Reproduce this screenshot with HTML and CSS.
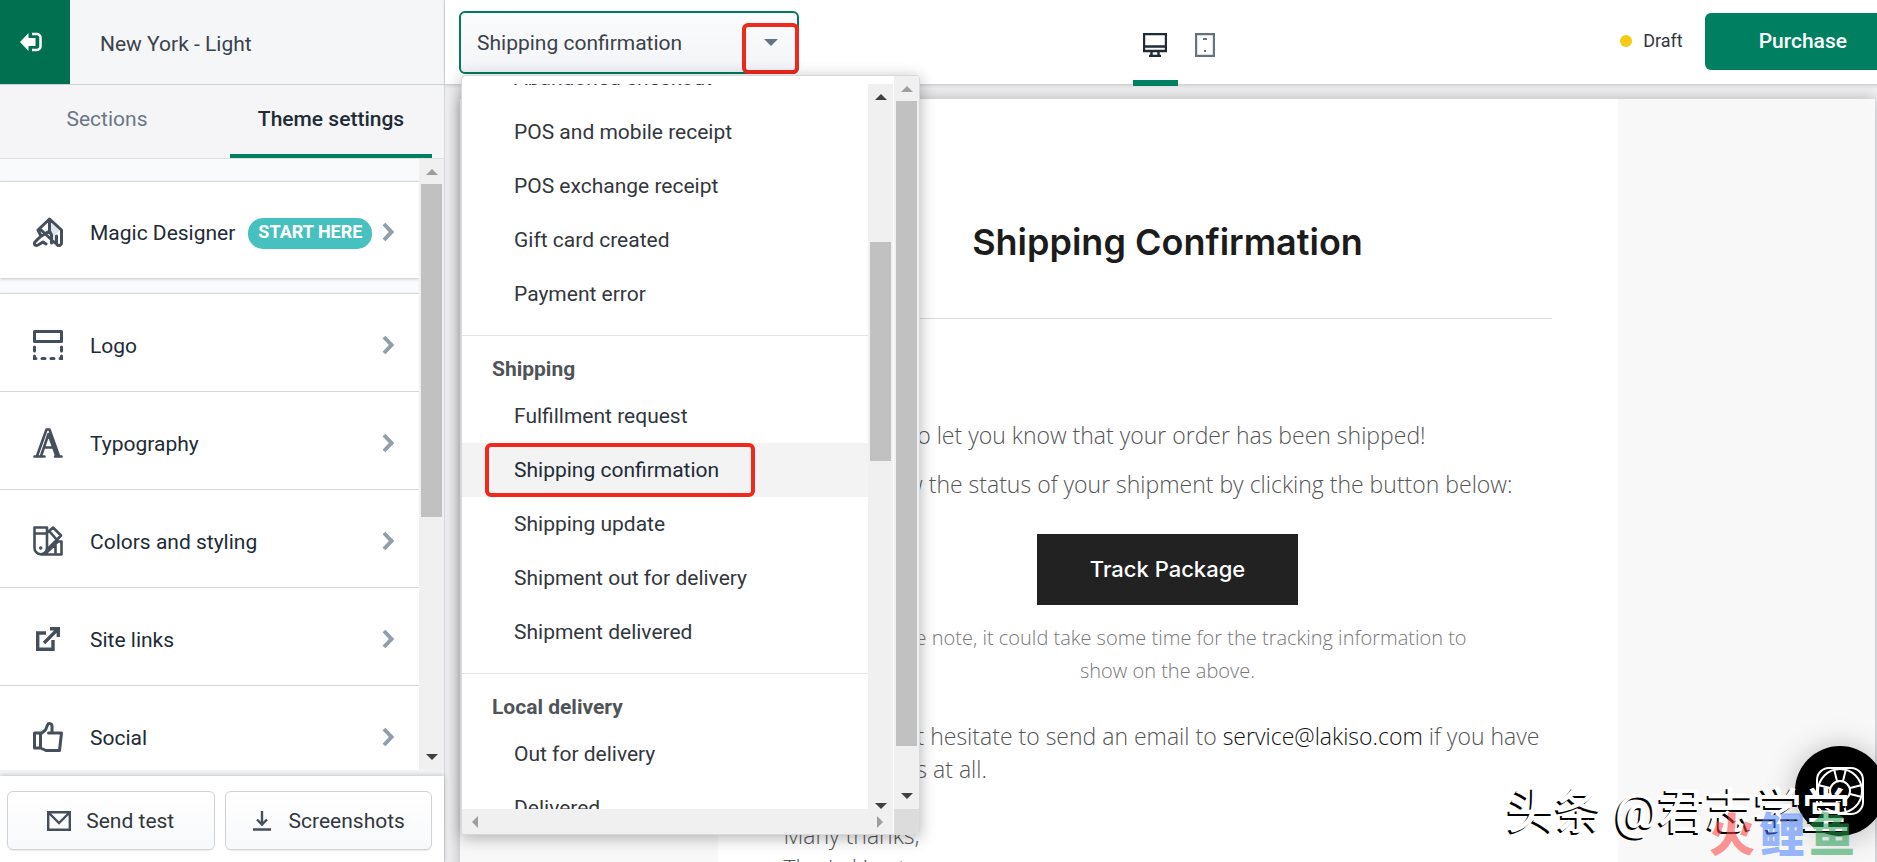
FILE: index.html
```html
<!DOCTYPE html>
<html lang="en">
<head>
<meta charset="utf-8">
<title>New York - Light</title>
<link rel="stylesheet" href="styles.css">
</head>
<body>
<div class="app">
  <aside class="sidebar">
    <header class="side-head">
      <button class="exit" aria-label="Exit editor">
        <svg width="24" height="20" viewBox="0 0 24 20"><path d="M1 10 9.500 1v5h7v8h-7v5z" fill="#fff"/><path d="M13 2h5a3.500 3.500 0 0 1 3.500 3.500v9A3.500 3.500 0 0 1 18 18h-5" fill="none" stroke="#fff" stroke-width="2.500"/></svg>
      </button>
      <h1 class="theme-name">New York - Light</h1>
    </header>
    <nav class="tabs">
      <button class="tab">Sections</button>
      <button class="tab tab-on">Theme settings</button>
    </nav>
    <div class="scroller">
      <div class="settings">
        <div class="group group-first">
          <button class="row">
            <svg class="icon" viewBox="0 0 30 30"><path d="M16.500 4v11l3 2v8l3 2V17l5-4z" fill="#dfe3ee"/><g fill="none" stroke="#454f5b" stroke-width="3" stroke-linejoin="round" stroke-linecap="round"><path d="M5 13 16.500 2 28.500 13v13a2.500 2.500 0 0 1-5 0v-7M5 13l3 6-6 6c-2 3 1 4 3 3l5-3 3 2M16.500 3v11l-8 5M16.500 14l2 4v8M7 12l15 14"/></g></svg>
            <span class="label">Magic Designer</span><span class="badge">START HERE</span>
            <svg class="chev" viewBox="0 0 12 20"><path d="M2 2l7.500 8L2 18" fill="none" stroke="#919eab" stroke-width="4"/></svg>
          </button>
        </div>
        <div class="group">
          <button class="row">
            <svg class="icon" viewBox="0 0 30 30"><g fill="none" stroke="#454f5b" stroke-width="3"><path d="M1.500 1.500h27v10h-27z" stroke-linejoin="round"/><path d="M1.500 17v4M28.500 17v4M9 28.500h3M18 28.500h3M1.500 26v2.500H3M28.500 26v2.500H27" stroke-linecap="round"/></g></svg>
            <span class="label">Logo</span>
            <svg class="chev" viewBox="0 0 12 20"><path d="M2 2l7.500 8L2 18" fill="none" stroke="#919eab" stroke-width="4"/></svg>
          </button>
          <button class="row">
            <svg class="icon" viewBox="0 0 30 30"><g fill="none" stroke="#454f5b" stroke-width="2.600" stroke-linecap="round" stroke-linejoin="round"><path d="M1.500 28.500h10M22 28.500h6.500M4 28 13.500 1.500h3L26 28M8 28 15.500 6 23 27M11.500 19.500h9"/></g></svg>
            <span class="label">Typography</span>
            <svg class="chev" viewBox="0 0 12 20"><path d="M2 2l7.500 8L2 18" fill="none" stroke="#919eab" stroke-width="4"/></svg>
          </button>
          <button class="row">
            <svg class="icon" viewBox="0 0 30 30"><g fill="none" stroke="#454f5b" stroke-width="2.600" stroke-linejoin="round"><path d="M1.500 1.500h12.500V22a6.250 6.250 0 0 1-12.500 0zM1.500 7.500h12.500M7.700 28.500h20.800V15.500H25L12 28M14 7l6-5.500 8 8L13 25M17 6l7 8M22.500 18v10"/></g><circle cx="7.700" cy="22" r="1.800" fill="#454f5b"/></svg>
            <span class="label">Colors and styling</span>
            <svg class="chev" viewBox="0 0 12 20"><path d="M2 2l7.500 8L2 18" fill="none" stroke="#919eab" stroke-width="4"/></svg>
          </button>
          <button class="row">
            <svg class="icon" viewBox="0 0 30 30"><g fill="none" stroke="#454f5b" stroke-width="3.400"><path d="M13 9H4.700v16.300H20V16"/><path d="M11 19 25 5M17 4.700h8.300V13"/></g></svg>
            <span class="label">Site links</span>
            <svg class="chev" viewBox="0 0 12 20"><path d="M2 2l7.500 8L2 18" fill="none" stroke="#919eab" stroke-width="4"/></svg>
          </button>
          <button class="row">
            <svg class="icon" viewBox="0 0 30 30"><g fill="none" stroke="#454f5b" stroke-width="3" stroke-linejoin="round" stroke-linecap="round"><path d="M1.500 11h6v15h-6zM7.500 12l5-4 2-5c1-2.500 4.500-1.500 4.500 1v7h9.500l-2 17.500H13L7.500 26M15.500 11H19"/></g></svg>
            <span class="label">Social</span>
            <svg class="chev" viewBox="0 0 12 20"><path d="M2 2l7.500 8L2 18" fill="none" stroke="#919eab" stroke-width="4"/></svg>
          </button>
        </div>
      </div>
      <div class="vbar"><i class="arrow up dim"></i><i class="thumb side-thumb"></i><i class="arrow down"></i></div>
    </div>
    <footer class="side-foot">
      <button class="btn"><svg width="24" height="20" viewBox="0 0 24 20"><path d="M1.200 1.200h21.600v17.600H1.200zM2 2l10 10L22 2" fill="none" stroke="#454f5b" stroke-width="2.400"/></svg>Send test</button>
      <button class="btn btn-wide"><svg width="20" height="20" viewBox="0 0 20 20"><path d="M10 0v13M5 8.500l5 5 5-5M1 18.500h18" fill="none" stroke="#454f5b" stroke-width="2.400"/></svg>Screenshots</button>
    </footer>
  </aside>

  <main class="main">
    <header class="topbar">
      <div class="picker">
        <select class="select" aria-label="Email template">
          <option>Shipping confirmation</option>
        </select>
        <i class="caret"></i>
        <i class="mark mark-caret"></i>
        <div class="menu">
          <div class="menu-list">
            <ul class="options">
              <li class="opt">Abandoned checkout</li>
              <li class="opt">POS and mobile receipt</li>
              <li class="opt">POS exchange receipt</li>
              <li class="opt">Gift card created</li>
              <li class="opt">Payment error</li>
              <li class="opt-head">Shipping</li>
              <li class="opt">Fulfillment request</li>
              <li class="opt opt-on">Shipping confirmation<i class="mark mark-opt"></i></li>
              <li class="opt">Shipping update</li>
              <li class="opt">Shipment out for delivery</li>
              <li class="opt">Shipment delivered</li>
              <li class="opt-head">Local delivery</li>
              <li class="opt">Out for delivery</li>
              <li class="opt">Delivered</li>
            </ul>
            <div class="vbar"><i class="arrow up"></i><i class="thumb inner-thumb"></i><i class="arrow down"></i></div>
          </div>
          <div class="hbar"><i class="arrow left dim"></i><i class="arrow right dim"></i></div>
          <div class="vbar outer"><i class="arrow up dim"></i><i class="thumb outer-thumb"></i><i class="arrow down"></i></div>
          <i class="corner"></i>
        </div>
      </div>
      <div class="devices">
        <button class="device device-on" aria-label="Desktop"><svg width="24" height="24" viewBox="0 0 24 24"><path d="M1 1h22v17H1zM1 13.500h22M8.500 18v5M15.500 18v5M6 23h12" fill="none" stroke="#212b36" stroke-width="2.400"/></svg></button>
        <button class="device" aria-label="Mobile"><svg width="20" height="24" viewBox="0 0 20 24"><path d="M1 1h18v22H1z" fill="none" stroke="#637381" stroke-width="2.400"/><path d="M8 6h4M9 18h2" stroke="#637381" stroke-width="2"/></svg></button>
      </div>
      <div class="actions">
        <span class="status"><i class="dot"></i>Draft</span>
        <button class="purchase">Purchase</button>
      </div>
    </header>
    <div class="stage">
      <div class="frame">
        <article class="email">
          <h2 class="title">Shipping Confirmation</h2>
          <p class="lead">Just wanted to let you know that your order has been shipped!</p>
          <p class="lead">You may view the status of your shipment by clicking the button below:</p>
          <a class="track" href="#">Track Package</a>
          <p class="note">Please note, it could take some time for the tracking information to show on the above.</p>
          <p class="body">Please do not hesitate to send an email to <a class="mail" href="#">service@lakiso.com</a> if you have any questions at all.</p>
          <p class="body">Many thanks,<br>The Lakiso team</p>
        </article>
      </div>
    </div>
  </main>

  <button class="help" aria-label="Help">
    <svg width="50" height="50" viewBox="0 0 50 50"><g fill="none" stroke="#fff" stroke-width="2"><rect x="2" y="2" width="46" height="46" rx="12"/><circle cx="25" cy="25" r="22"/><circle cx="25" cy="25" r="10"/><path d="M19 3l3 12M31 3l-3 12M47 19l-12 3M47 31l-12-3M3 19l12 3M3 31l12-3M19 47l3-12M31 47l-3-12"/></g></svg>
  </button>
  <div class="sign">头条 @君志学堂</div>
  <div class="brand"><span class="r">火</span><span class="b">鲤</span><span class="g">鱼</span></div>
</div>
</body>
</html>
```
FILE: styles.css
```css
* { box-sizing: border-box; }
body { margin: 0; font-family: Roboto, "Noto Sans CJK SC", sans-serif; color: #212b36; }
button { border: 0; margin: 0; padding: 0; background: none; font: inherit; color: inherit; }
ul { list-style: none; margin: 0; padding: 0; }
h1, h2, p { margin: 0; }

.app { position: relative; display: flex; height: 100vh; overflow: hidden; font-size: 21px; line-height: 28px; }

/* Sidebar */
.sidebar { flex: none; width: 445px; display: flex; flex-direction: column; background: #f4f5f7; border-right: 1px solid #d5d8dc; }
.side-head { flex: none; display: flex; height: 85px; align-items: center; border-bottom: 1px solid #cfd3d8; background: #f4f6f8; }
.exit { width: 70px; height: 84px; padding-right: 8px; background: #007051; display: flex; align-items: center; justify-content: center; }
.theme-name { margin-left: 30px; padding-top: 3px; font-size: 21px; font-weight: 400; color: #3a424b; }
.tabs { flex: none; height: 74px; display: flex; background: #f5f5f8; border-bottom: 1px solid #dfe1e5; padding-right: 12px; gap: 16px; }
.tab { width: 214px; padding-bottom: 1px; color: #6b7785; border-bottom: 4px solid transparent; }
.tab-on { flex: 1; color: #212b36; font-weight: 500; border-bottom-color: #008060; }
.scroller { flex: 1; min-height: 0; display: flex; background: #f9fafb; }
.settings { flex: 1; overflow: hidden; padding-top: 23px; }
.group { margin-bottom: 16px; background: #fff; box-shadow: 0 -1px 1px rgba(0, 0, 0, .1), 0 1px 3px rgba(0, 0, 0, .22); }
.row { width: 100%; height: 98px; padding: 4px 25px 0 33px; display: flex; align-items: center; text-align: left; border-bottom: 1px solid #d3d6da; }
.group-first .row { height: 96px; border-bottom: 0; }
.icon { width: 30px; height: 30px; margin-right: 27px; flex: none; }
.label { padding-top: 2px; }
.badge { margin: 2px 0 0 13px; padding: 0 10px; height: 31px; border-radius: 15px; background: #47c1bf; color: #fff; font-size: 18px; line-height: 28px; font-weight: 700; }
.chev { width: 12px; height: 20px; margin-left: auto; }
.side-foot { position: relative; flex: none; height: 86px; margin-top: 6px; display: flex; gap: 10px; padding: 15px 12px 12px 7px; background: #fff; box-shadow: 0 -1px 5px rgba(0, 0, 0, .2); }
.btn { flex: 1; height: 59px; display: flex; align-items: center; justify-content: center; gap: 15px; border: 1px solid #cfd3d8; border-radius: 6px; background: linear-gradient(#fff, #f8f9fb); color: #32373d; box-shadow: 0 1px 1px rgba(0, 0, 0, .08); }
.btn-wide { gap: 17px; }

/* Drawn scrollbars */
.vbar { position: relative; flex: none; width: 25px; display: flex; flex-direction: column; align-items: center; justify-content: space-between; padding: 10px 0; background: #f0f0f0; }
.arrow { border: 6px solid transparent; }
.arrow.up { border-top: 0; border-bottom-color: #404040; }
.arrow.down { border-bottom: 0; border-top-color: #404040; }
.arrow.left { border-left: 0; border-right-color: #404040; }
.arrow.right { border-right: 0; border-left-color: #404040; }
.arrow.up.dim { border-bottom-color: #9e9e9e; }
.arrow.left.dim { border-right-color: #9e9e9e; }
.arrow.right.dim { border-left-color: #9e9e9e; }
.thumb { position: absolute; left: 2px; right: 2px; background: #c1c1c1; }
.side-thumb { top: 25px; height: 333px; }
.inner-thumb { top: 158px; height: 219px; }
.outer-thumb { top: 25px; height: 645px; }

/* Top bar */
.main { flex: 1; min-width: 0; display: flex; flex-direction: column; background: #efeff2; }
.topbar { position: relative; z-index: 2; flex: none; height: 85px; margin-right: -24px; padding-left: 14px; display: grid; grid-template-columns: 1fr auto 1fr; align-items: center; background: #fff; border-bottom: 1px solid #d0d2d6; box-shadow: 0 1px 3px rgba(0, 0, 0, .12); }
.picker { position: relative; align-self: start; margin-top: 11px; width: 340px; height: 63px; }
.select { appearance: none; display: block; width: 100%; height: 100%; padding: 0 60px 0 16px; border: 2px solid #007a5c; border-radius: 6px; background: linear-gradient(#fafbfc, #f4f5f8); font: inherit; color: #3a424b; }
.caret { position: absolute; right: 21px; top: 28px; border: 7px solid transparent; border-top-color: #637381; border-bottom: 0; }
.mark { position: absolute; border: 4px solid #f0281e; border-radius: 6px; }
.mark-caret { right: 0; top: 12px; width: 57px; height: 51px; }
.devices { display: flex; align-self: stretch; gap: 5px; }
.device { width: 45px; height: 86px; padding-top: 10px; border-bottom: 6px solid transparent; display: flex; align-items: center; justify-content: center; }
.device-on { border-bottom-color: #008060; }
.actions { display: flex; justify-content: flex-end; align-items: center; gap: 22px; padding-bottom: 4px; }
.status { display: flex; align-items: center; gap: 11px; font-size: 18px; color: #32373d; }
.dot { width: 12px; height: 12px; border-radius: 50%; background: #f7cb15; }
.purchase { height: 57px; padding: 0 54px; border-radius: 6px; background: #008060; color: #fff; font-weight: 500; }

/* Template menu */
.menu { position: absolute; left: 2px; top: 64px; width: 459px; height: 760px; display: grid; grid-template: 1fr 25px / 1fr 25px; column-gap: 1px; background: #fff; border: 1px solid #d8d8d8; border-radius: 4px; box-shadow: 0 3px 16px rgba(0, 0, 0, .3); overflow: hidden; }
.menu-list { display: flex; min-height: 0; margin-top: 8px; overflow: hidden; }
.options { flex: 1; min-height: 0; margin-top: -33px; color: #32373d; }
.menu-list .vbar { padding-bottom: 0; }
.opt { position: relative; height: 54px; padding-left: 52px; line-height: 54px; }
.opt-on { background: #f3f3f4; color: #212b36; }
.opt-head { height: 68px; padding: 20px 0 0 30px; font-weight: 700; color: #4f5458; background: linear-gradient(#e1e3e5, #e1e3e5) 0 14px / 100% 1px no-repeat; line-height: 56px; }
.mark-opt { left: 23px; top: 0; width: 270px; height: 54px; }
.hbar { grid-row: 2; grid-column: 1; display: flex; align-items: center; justify-content: space-between; padding: 0 10px; background: #f0f0f0; }
.outer { grid-row: 1; grid-column: 2; }
.corner { grid-row: 2; grid-column: 2; background: #dcdcdc; }

/* Email preview */
.stage { flex: 1; min-height: 0; padding: 14px 2px 0 15px; overflow: hidden; }
.frame { height: 900px; background: #f8f8f8; box-shadow: 0 0 14px rgba(0, 0, 0, .25); }
.email { width: 900px; height: 100%; margin: 0 auto; padding: 0 66px; background: #fff; font-family: "Open Sans", sans-serif; font-weight: 300; font-size: 23px; line-height: 33px; color: #555; }
.title { padding: 119px 0 52px; border-bottom: 1px solid #dadada; margin-bottom: 100px; text-align: center; font-family: Inter, sans-serif; font-weight: 600; font-size: 36px; line-height: 48px; color: #1c1c1c; }
.lead { margin-bottom: 16px; }
.track { display: block; width: 261px; height: 71px; margin: 33px auto 16px; background: #222; color: #fff; text-align: center; text-decoration: none; font-family: Inter, sans-serif; font-weight: 500; font-size: 22px; line-height: 71px; }
.note { padding: 0 60px; margin-bottom: 33px; text-align: center; font-size: 20px; color: #777; }
.body { margin-bottom: 33px; }
.mail { color: #111; text-decoration: none; }

/* Floating pieces */
.help { position: absolute; z-index: 3; right: -8px; bottom: 26px; width: 90px; height: 90px; border-radius: 50%; background: #000; display: flex; align-items: center; justify-content: center; box-shadow: 0 2px 30px rgba(0, 0, 0, .25); }
.sign { position: absolute; z-index: 4; right: 27px; bottom: 18px; font-size: 48px; line-height: 64px; font-weight: 500; color: #fff; text-shadow: -2px 2px 0 #000; white-space: nowrap; }
.brand { position: absolute; z-index: 5; right: 22px; bottom: 4px; display: flex; gap: 4px; font-size: 46px; line-height: 46px; font-weight: 900; opacity: .55; }
.r { color: #ff4040; }
.b { color: #4a80ff; }
.g { color: #28a055; }
```
